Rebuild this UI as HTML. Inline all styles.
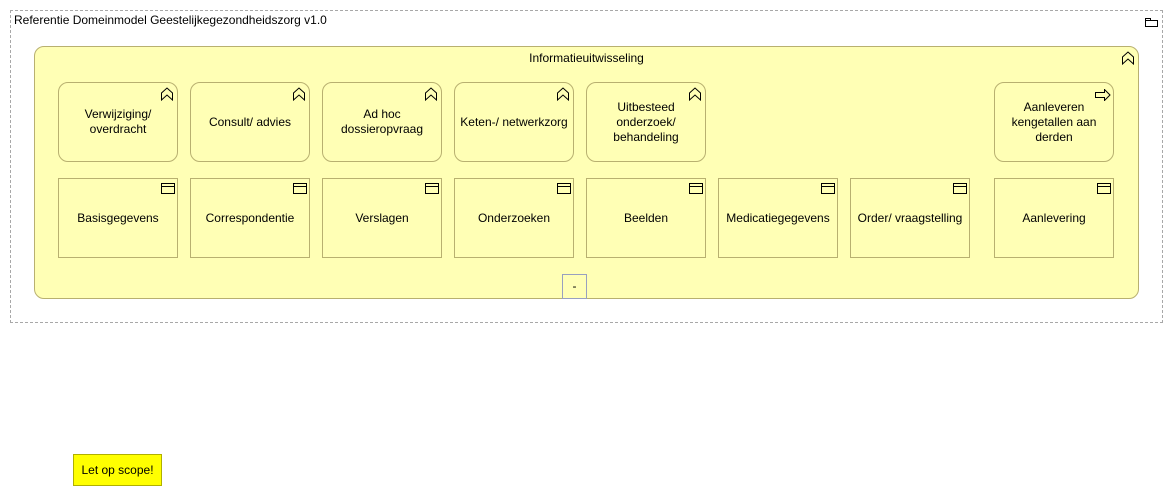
<!DOCTYPE html>
<html><head><style>
body{margin:0;width:1173px;height:496px;background:#fff;font-family:"Liberation Sans",sans-serif;font-size:12px;color:#000;position:relative;overflow:hidden}
.a{position:absolute;box-sizing:border-box}
.outer{left:10px;top:10px;width:1153px;height:313px;border:1px dashed #a8a8a8}
.grp{left:34px;top:46px;width:1105px;height:253px;background:#ffffb5;border:1px solid #b8b070;border-radius:10px}
.b{width:120px;height:80px;background:#ffffb5;border:1px solid #b8b070;display:flex;align-items:center;justify-content:center;text-align:center;line-height:15px;padding:0 4px}
.r{border-radius:10px}
.ic{position:absolute}
</style></head><body>
<div class="a outer"></div>
<div class="a" style="left:14px;top:13px">Referentie Domeinmodel Geestelijkegezondheidszorg v1.0</div>
<svg class="ic" style="left:1145px;top:16px" width="13" height="11"><path d="M0.5 2.5h5v2h7v6h-12z M0.5 4.5h5" fill="none" stroke="#000"/></svg>
<div class="a grp"></div>
<div class="a" style="left:34px;top:51px;width:1105px;text-align:center">Informatieuitwisseling</div>
<svg class="ic" style="left:1121px;top:51px" width="14" height="14"><path d="M1.5 13V6L7 1l5.5 5v7L7 8z" fill="none" stroke="#000"/></svg>

<div class="a b r" style="left:58px;top:82px">Verwijziging/<br>overdracht</div>
<div class="a b r" style="left:190px;top:82px">Consult/ advies</div>
<div class="a b r" style="left:322px;top:82px">Ad hoc<br>dossieropvraag</div>
<div class="a b r" style="left:454px;top:82px;white-space:nowrap;padding:0">Keten-/ netwerkzorg</div>
<div class="a b r" style="left:586px;top:82px">Uitbesteed<br>onderzoek/<br>behandeling</div>
<div class="a b r" style="left:994px;top:82px">Aanleveren<br>kengetallen aan<br>derden</div>

<svg class="ic" style="left:160px;top:87px" width="14" height="14"><path d="M1.5 13V6L7 1l5.5 5v7L7 8z" fill="none" stroke="#000"/></svg>
<svg class="ic" style="left:292px;top:87px" width="14" height="14"><path d="M1.5 13V6L7 1l5.5 5v7L7 8z" fill="none" stroke="#000"/></svg>
<svg class="ic" style="left:424px;top:87px" width="14" height="14"><path d="M1.5 13V6L7 1l5.5 5v7L7 8z" fill="none" stroke="#000"/></svg>
<svg class="ic" style="left:556px;top:87px" width="14" height="14"><path d="M1.5 13V6L7 1l5.5 5v7L7 8z" fill="none" stroke="#000"/></svg>
<svg class="ic" style="left:688px;top:87px" width="14" height="14"><path d="M1.5 13V6L7 1l5.5 5v7L7 8z" fill="none" stroke="#000"/></svg>
<svg class="ic" style="left:1095px;top:89px" width="16" height="12"><path d="M0.5 3.5h9v-3l5.5 5.5-5.5 5.5v-3h-9z" fill="none" stroke="#000"/></svg>

<div class="a b" style="left:58px;top:178px">Basisgegevens</div>
<div class="a b" style="left:190px;top:178px">Correspondentie</div>
<div class="a b" style="left:322px;top:178px">Verslagen</div>
<div class="a b" style="left:454px;top:178px">Onderzoeken</div>
<div class="a b" style="left:586px;top:178px">Beelden</div>
<div class="a b" style="left:718px;top:178px;white-space:nowrap;padding:0">Medicatiegegevens</div>
<div class="a b" style="left:850px;top:178px;white-space:nowrap;padding:0">Order/ vraagstelling</div>
<div class="a b" style="left:994px;top:178px">Aanlevering</div>

<svg class="ic" style="left:161px;top:183px" width="14" height="11"><path d="M0.5 0.5h13v10h-13z M0.5 3.5h13" fill="none" stroke="#000"/></svg>
<svg class="ic" style="left:293px;top:183px" width="14" height="11"><path d="M0.5 0.5h13v10h-13z M0.5 3.5h13" fill="none" stroke="#000"/></svg>
<svg class="ic" style="left:425px;top:183px" width="14" height="11"><path d="M0.5 0.5h13v10h-13z M0.5 3.5h13" fill="none" stroke="#000"/></svg>
<svg class="ic" style="left:557px;top:183px" width="14" height="11"><path d="M0.5 0.5h13v10h-13z M0.5 3.5h13" fill="none" stroke="#000"/></svg>
<svg class="ic" style="left:689px;top:183px" width="14" height="11"><path d="M0.5 0.5h13v10h-13z M0.5 3.5h13" fill="none" stroke="#000"/></svg>
<svg class="ic" style="left:821px;top:183px" width="14" height="11"><path d="M0.5 0.5h13v10h-13z M0.5 3.5h13" fill="none" stroke="#000"/></svg>
<svg class="ic" style="left:953px;top:183px" width="14" height="11"><path d="M0.5 0.5h13v10h-13z M0.5 3.5h13" fill="none" stroke="#000"/></svg>
<svg class="ic" style="left:1097px;top:183px" width="14" height="11"><path d="M0.5 0.5h13v10h-13z M0.5 3.5h13" fill="none" stroke="#000"/></svg>

<div class="a" style="left:562px;top:274px;width:25px;height:25px;border:1px solid #98a0c0;text-align:center;line-height:22px">-</div>

<div class="a" style="left:73px;top:454px;width:89px;height:32px;background:#ffff00;border:1px solid #b0b000;display:flex;align-items:center;justify-content:center">Let op scope!</div>
</body></html>
